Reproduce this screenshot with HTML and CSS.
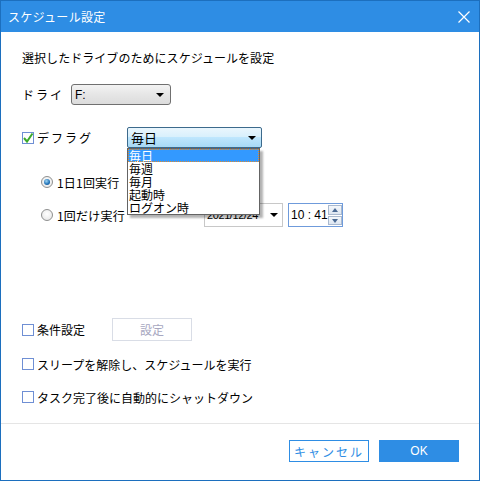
FILE: index.html
```html
<!DOCTYPE html>
<html lang="ja">
<head>
<meta charset="utf-8">
<link rel="stylesheet" href="styles.css">
</head>
<body>
<div class="window">
  <div class="titlebar">
    <span class="title">スケジュール設定</span>
    <svg class="close" width="12" height="12" viewBox="0 0 12 12"><path d="M0.5 0.5L11.5 11.5M11.5 0.5L0.5 11.5" stroke="#fff" stroke-width="1.2" fill="none"/></svg>
  </div>
  <div class="content">
    <div class="row r1">選択したドライブのためにスケジュールを設定</div>
    <div class="row r2">
      <span class="lbl-drive">ドライ</span>
      <div class="select drive"><span>F:</span><span class="arrow"></span></div>
    </div>
    <div class="row r3">
      <span class="check checked"><svg width="12" height="12" viewBox="0 0 12 12"><path d="M2 6L5 9.5L10.5 1.5" stroke="#3caa2a" stroke-width="2" fill="none"/></svg></span>
      <span class="lbl-defrag">デフラグ</span>
      <div class="combo-wrap">
        <div class="combo"><span>毎日</span><span class="arrow"></span></div>
        <ul class="list">
          <li class="sel">毎日</li>
          <li>毎週</li>
          <li>毎月</li>
          <li>起動時</li>
          <li>ログオン時</li>
        </ul>
      </div>
    </div>
    <div class="row r4">
      <span class="radio on"></span><span class="rlbl">1日1回実行</span>
    </div>
    <div class="row r5">
      <span class="radio"></span><span class="rlbl rlbl2">1回だけ実行</span>
      <div class="date"><span>2021/12/24</span><span class="arrow"></span></div>
      <div class="time"><span class="tval">10 : 41</span>
        <div class="spin"><span class="up"></span><span class="down"></span></div>
      </div>
    </div>
    <div class="row r6">
      <span class="check"></span><span class="lbl-cond">条件設定</span>
      <div class="btn-setting">設定</div>
    </div>
    <div class="row r7">
      <span class="check"></span><span>スリープを解除し、スケジュールを実行</span>
    </div>
    <div class="row r8">
      <span class="check"></span><span>タスク完了後に自動的にシャットダウン</span>
    </div>
  </div>
  <div class="footer">
    <div class="btn cancel">キャンセル</div>
    <div class="btn ok">OK</div>
  </div>
</div>
</body>
</html>
```
FILE: styles.css
```css
* { box-sizing: border-box; }
body {
  margin: 0;
  font-family: "Noto Sans CJK JP", "Noto Sans", sans-serif;
  font-size: 12px;
  color: #000;
  background: #fff;
}
.window {
  width: 480px;
  height: 481px;
  border: 1px solid #1c6fbe;
  display: flex;
  flex-direction: column;
  background: #fff;
}
.titlebar {
  height: 31px;
  background: #2e8de4;
  display: flex;
  align-items: center;
  justify-content: space-between;
  padding: 0 9px 0 7px;
  flex: none;
}
.title { color: #fff; font-size: 12px; letter-spacing: 0.3px; }
.close { display: block; }
.content {
  flex: 1;
  padding: 15px 0 0 21px;
  display: flex;
  flex-direction: column;
}
.row {
  display: flex;
  align-items: center;
  height: 20px;
  flex: none;
  white-space: nowrap;
}
.r1 { letter-spacing: 0.05px; }
.r2 { margin-top: 17px; height: 21px; }
.r3 { margin-top: 22px; height: 21px; }
.r4 { margin-top: 24px; }
.r5 { margin-top: 11px; height: 24px; }
.r6 { margin-top: 91px; height: 23px; }
.r7 { margin-top: 13px; }
.r8 { margin-top: 13px; }

.lbl-drive { width: 49px; letter-spacing: 2px; }
.select.drive {
  width: 100px;
  height: 21px;
  border: 1px solid #707070;
  border-radius: 3px;
  background: linear-gradient(#f3f3f3, #e6e6e6 50%, #dcdcdc);
  display: flex;
  align-items: center;
  justify-content: space-between;
  padding: 0 6px 0 3px;
  font-family: "Liberation Sans", sans-serif;
  font-size: 12px;
}
.arrow {
  width: 0; height: 0;
  flex: none;
  border-left: 4px solid transparent;
  border-right: 4px solid transparent;
  border-top: 4px solid #000;
}
.check {
  width: 12px;
  height: 12px;
  border: 1px solid #6f8fd4;
  background: #fff;
  display: inline-flex;
  flex: none;
  margin-right: 3px;
}
.check svg { display: block; margin: -1px; }
.lbl-defrag { width: 90px; letter-spacing: 2px; }
.combo-wrap { position: relative; }
.combo {
  width: 135px;
  height: 21px;
  border: 1px solid #3c6a8c;
  border-radius: 2px;
  background: linear-gradient(#eaf6fd, #d9f0fc 45%, #bee6fd 50%, #a7d9f5);
  display: flex;
  align-items: center;
  justify-content: space-between;
  padding: 0 5px 0 3px;
  font-size: 13px;
}
.list {
  position: absolute;
  left: 0;
  top: 21px;
  width: 133px;
  margin: 0;
  padding: 0;
  list-style: none;
  border: 1px solid #646464;
  background: #fff;
  box-shadow: 3px 3px 2px rgba(0,0,0,0.3);
  z-index: 5;
  font-size: 12px;
}
.list li { height: 13px; line-height: 13px; padding-left: 1px; }
.list li.sel {
  background: #3399ff;
  color: #fff;
  outline: 1px dotted #e08a2c;
  outline-offset: -1px;
}
.radio {
  width: 12px;
  height: 12px;
  border-radius: 50%;
  border: 1px solid #8e8f8f;
  background: radial-gradient(circle at 50% 40%, #fff, #e3e3e3);
  margin-left: 19px;
  margin-right: 4px;
  flex: none;
  position: relative;
}
.radio.on::after {
  content: "";
  position: absolute;
  left: 2px; top: 2px;
  width: 6px; height: 6px;
  border-radius: 50%;
  background: radial-gradient(circle at 40% 35%, #9fd6f5, #1d6fb5 60%, #0e4d86);
}
.rlbl { letter-spacing: 0.2px; }
.rlbl2 { width: 147px; }
.date {
  width: 79px;
  height: 24px;
  border: 1px solid #c8c8c8;
  display: flex;
  align-items: center;
  justify-content: space-between;
  padding: 0 4px 0 2px;
  font-family: "Liberation Sans", sans-serif;
  font-size: 11px;
  letter-spacing: -0.4px;
}
.time {
  margin-left: 5px;
  width: 55px;
  height: 24px;
  border: 1px solid #6f9bdb;
  display: flex;
  align-items: center;
  justify-content: space-between;
  padding: 0 1px 0 2px;
  font-family: "Liberation Sans", sans-serif;
  font-size: 12px;
}
.tval { white-space: nowrap; }
.spin { display: flex; flex-direction: column; width: 14px; height: 20px; flex: none; }
.spin span {
  flex: 1;
  border: 1px solid #a9b9cf;
  background: linear-gradient(#f4f7fb, #dde6f1);
  position: relative;
}
.spin span + span { margin-top: 1px; }
.spin .up::after, .spin .down::after {
  content: "";
  position: absolute;
  left: 3px; top: 2px;
  border-left: 3px solid transparent;
  border-right: 3px solid transparent;
}
.spin .up::after { border-bottom: 4px solid #4a6a94; }
.spin .down::after { border-top: 4px solid #4a6a94; }
.lbl-cond { width: 75px; }
.btn-setting {
  width: 80px;
  height: 23px;
  border: 1px solid #d9dde6;
  color: #a7a7c0;
  display: flex;
  align-items: center;
  justify-content: center;
}
.footer {
  height: 57px;
  border-top: 1px solid #e5e5e5;
  display: flex;
  justify-content: flex-end;
  align-items: flex-start;
  padding: 16px 20px 0 0;
  gap: 10px;
  flex: none;
}
.btn {
  width: 80px;
  height: 22px;
  display: flex;
  align-items: center;
  justify-content: center;
}
.cancel { border: 1px solid #2e8de4; color: #2e8de4; letter-spacing: 2px; }
.ok { background: #2e8de4; color: #fff; font-family: "Liberation Sans", sans-serif; font-size: 12px; }
```
